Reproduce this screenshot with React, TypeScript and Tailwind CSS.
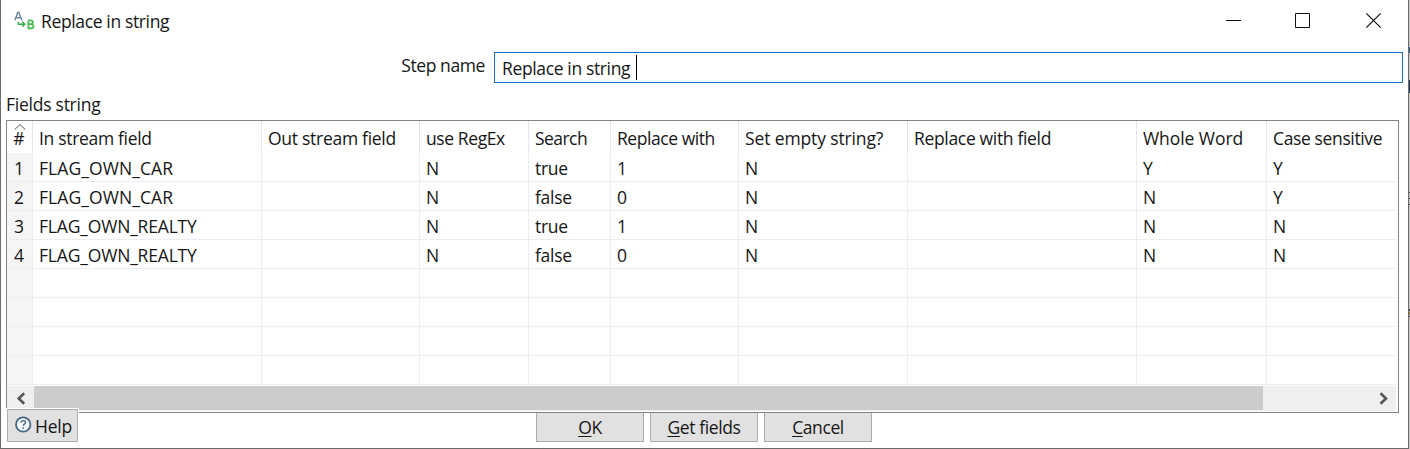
import React from "react";

const columns = [
  { label: "In stream field", tracking: "tracking-[-0.32px]" },
  { label: "Out stream field", tracking: "tracking-[-0.28px]" },
  { label: "use RegEx", tracking: "tracking-[-0.4px]" },
  { label: "Search", tracking: "tracking-[-0.55px]" },
  { label: "Replace with", tracking: "tracking-[-0.45px]" },
  { label: "Set empty string?", tracking: "tracking-[-0.13px]" },
  { label: "Replace with field", tracking: "tracking-[-0.33px]" },
  { label: "Whole Word", tracking: "tracking-[-0.06px]" },
  { label: "Case sensitive", tracking: "tracking-[-0.37px]" },
];

const rows = [
  ["FLAG_OWN_CAR", "", "N", "true", "1", "N", "", "Y", "Y"],
  ["FLAG_OWN_CAR", "", "N", "false", "0", "N", "", "N", "Y"],
  ["FLAG_OWN_REALTY", "", "N", "true", "1", "N", "", "N", "N"],
  ["FLAG_OWN_REALTY", "", "N", "false", "0", "N", "", "N", "N"],
  ["", "", "", "", "", "", "", "", ""],
  ["", "", "", "", "", "", "", "", ""],
  ["", "", "", "", "", "", "", "", ""],
  ["", "", "", "", "", "", "", "", ""],
];

const grid =
  "grid grid-cols-[26px_229px_158px_109px_82px_128px_169px_229px_130px_131px]";

function cellTracking(column: number, text: string) {
  if (column > 0) return "tracking-[-0.3px]";
  return text.endsWith("CAR") ? "tracking-[0.08px]" : "tracking-[-0.18px]";
}

function TitleBar() {
  return (
    <header className="flex h-[42px] shrink-0 items-center pl-[13px]">
      <svg width="22" height="20" viewBox="0 0 22 20" fill="none" className="shrink-0">
        <path d="M.8 9.2 3.8 1.3h1L7.8 9.2M1.9 6.7h4.8" stroke="#71879d" strokeWidth="1.5" />
        <path d="M4.3 10.8v2.4h6M8.2 10.6l2.5 2.6-2.5 2.6" stroke="#36ad4c" strokeWidth="1.5" />
        <path d="M14.4 9.4v8h2.6c3.3 0 3.3-4.2 0-4.2h-2.6m0-3.8h2.3c2.8 0 2.8 3.8 0 3.8" stroke="#42bd4b" strokeWidth="1.7" />
      </svg>
      <h1 className="ml-[5px] pb-px leading-6 tracking-[-0.36px]">Replace in string</h1>
      <svg width="156" height="18" viewBox="0 0 156 18" fill="none" stroke="#111" className="ml-auto mr-[26px] shrink-0">
        <path d="M0 8.5h15" />
        <path d="M69.5 1.5h14v14h-14z" />
        <path d="m140.3 1.3 14.4 14.4m0-14.4-14.4 14.4" strokeWidth="1.2" />
      </svg>
    </header>
  );
}

function FieldsTable() {
  return (
    <section className="ml-[5px] h-[293px] w-[1393px] shrink-0 border border-[#828388] bg-white">
      <div className={grid + " h-8"}>
        <div className="relative flex justify-center border-r border-[#e3e6ef] pt-[5px] leading-6">
          <svg width="12" height="6" viewBox="0 0 12 6" fill="none" stroke="#555" className="absolute left-[7px] top-[3px]">
            <path d="m.7 5.5 5.3-5 5.3 5" />
          </svg>
          <span className="pr-px">#</span>
        </div>
        {columns.map((c, i) => (
          <div key={c.label} className={"whitespace-nowrap pl-[6px] pt-[5px] leading-6 " + c.tracking + (i < 8 ? " border-r border-[#e3e6ef]" : "")}>
            {c.label}
          </div>
        ))}
      </div>
      {rows.map((r, n) => (
        <div key={n} className={grid + " h-[29px]"}>
          <div className="flex justify-center border-b border-r border-[#ededf1] bg-[#f5f5f5] pr-px pt-[3px] leading-6">
            {r[0] ? n + 1 : ""}
          </div>
          {r.map((c, i) => (
            <div
              key={i}
              className={
                "whitespace-nowrap border-b border-[#ededf1] pl-[6px] pt-[3px] leading-6 " +
                (i < 8 ? "border-r " : "mr-[2px] ") +
                cellTracking(i, c)
              }
            >
              {c}
            </div>
          ))}
        </div>
      ))}
      <div className="mr-[2px] mt-px flex h-[25px] items-center bg-[#efefef]">
        <svg width="27" height="25" viewBox="0 0 27 25" fill="none" stroke="#555" strokeWidth="2.6">
          <path d="m17.2 7.2-5.5 5.3 5.5 5.3" />
        </svg>
        <div className="mb-px h-6 w-[1229px] bg-[#cccccc]" />
        <svg width="27" height="25" viewBox="0 0 27 25" fill="none" stroke="#555" strokeWidth="2.6" className="ml-auto">
          <path d="m11.5 7.2 5.5 5.3-5.5 5.3" />
        </svg>
      </div>
    </section>
  );
}

function ActionButton({ hot, rest }: { hot: string; rest: string }) {
  return (
    <button className="h-[29px] w-[108px] border border-t-0 border-[#adadad] bg-[#e1e1e1] pb-px leading-[26px] tracking-[-0.4px]">
      <span className="underline decoration-1 underline-offset-2">{hot}</span>
      {rest}
    </button>
  );
}

export default function App() {
  return (
    <div className="flex h-[449px] w-[1410px] overflow-hidden bg-[#c9c9c9] font-['Open_Sans',sans-serif] text-[17.5px] text-[#161616]">
      <main className="flex h-[449px] w-[1409px] shrink-0 flex-col border-b border-l border-r border-[#6c6a6c] bg-white">
        <TitleBar />
        <div className="mt-[10px] flex h-[31px] shrink-0 items-start">
          <label className="w-[484px] pt-px text-right leading-6 tracking-[-0.4px]">Step name</label>
          <div className="ml-[9px] flex h-[31px] w-[909px] items-center border border-[#1e70b8] pl-[7px]">
            <span className="leading-6 tracking-[-0.36px]">Replace in string</span>
            <span className="ml-[6px] h-[25px] w-px bg-black" />
          </div>
        </div>
        <h2 className="mt-[9px] h-7 shrink-0 pl-[5px] leading-6 tracking-[-0.25px]">Fields string</h2>
        <FieldsTable />
        <footer className="flex h-[35px] shrink-0 items-start">
          <button className="relative ml-[6px] mt-[-4px] flex h-[33px] w-[71px] items-center border border-[#adadad] bg-[#e1e1e1] pl-[7px] leading-6 tracking-[-0.2px] outline outline-1 outline-white">
            <svg width="17" height="17" viewBox="0 0 17 17" fill="none" className="mb-[3px] shrink-0">
              <circle cx="8.2" cy="8.5" r="7.2" fill="#f5f8fb" stroke="#456783" strokeWidth="1.8" />
              <path d="M6 6.8c0-2.9 4.5-2.7 4.5-.3 0 1.6-2.2 1.6-2.2 3.3M8.3 11.3v1.5" stroke="#456783" strokeWidth="1.4" />
            </svg>
            <span className="ml-[3px]">Help</span>
          </button>
          <div className="ml-[458px] flex gap-[6px]">
            <ActionButton hot="O" rest="K" />
            <ActionButton hot="G" rest="et fields" />
            <ActionButton hot="C" rest="ancel" />
          </div>
        </footer>
      </main>
      <aside className="flex w-px flex-col">
        <span className="mt-[47px] h-[6px] bg-[#31587b]" />
        <span className="mt-[27px] h-[13px] bg-[#1d4055]" />
        <span className="mt-[99px] h-px bg-[#333]" />
        <span className="mt-[5px] h-px bg-[#333]" />
        <span className="mt-[5px] h-px bg-[#333]" />
        <span className="mt-[104px] h-[2px] bg-[#333]" />
        <span className="mt-px h-[3px] bg-[#a07838]" />
        <span className="mt-px h-px bg-[#333]" />
      </aside>
    </div>
  );
}
